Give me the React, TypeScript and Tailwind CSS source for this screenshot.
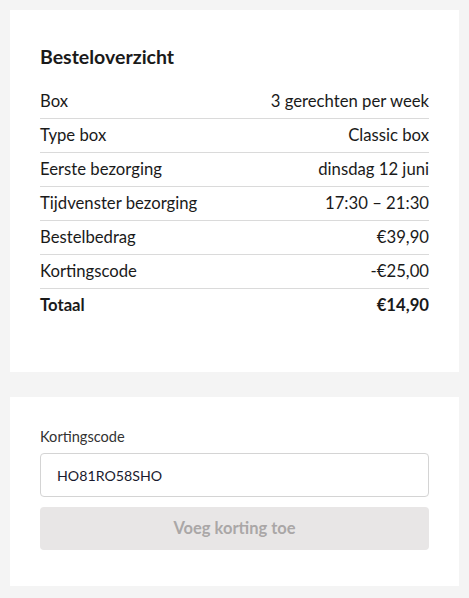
import React from 'react'

const rows = [
  { label: 'Box', value: '3 gerechten per week' },
  { label: 'Type box', value: 'Classic box' },
  { label: 'Eerste bezorging', value: 'dinsdag 12 juni' },
  { label: 'Tijdvenster bezorging', value: '17:30 – 21:30' },
  { label: 'Bestelbedrag', value: '€39,90' },
  { label: 'Kortingscode', value: '-€25,00' },
]

export default function App() {
  return (
    <div className="min-h-screen bg-[#f4f4f4] px-[10px] pt-[10px] pb-3 text-[#1a1a1a] font-['Lato',sans-serif]">
      {/* Order summary */}
      <div className="bg-white px-[30px] pt-[35px] pb-[50px]">
        <h2 className="text-[19.5px] leading-6 font-bold mb-[16px]">Besteloverzicht</h2>
        <div>
          {rows.map((row) => (
            <div
              key={row.label}
              className="flex items-center justify-between h-[34px] border-b border-[#dadada] text-[16.7px]"
            >
              <span>{row.label}</span>
              <span>{row.value}</span>
            </div>
          ))}
          <div className="flex items-center justify-between h-[33px] text-[16.7px] font-bold">
            <span>Totaal</span>
            <span>€14,90</span>
          </div>
        </div>
      </div>

      {/* Discount code */}
      <div className="bg-white mt-[25px] px-[30px] pt-[30px] pb-[36px]">
        <label className="block text-[14.6px] leading-5 mb-[6px] text-[#333]">Kortingscode</label>
        <input
          type="text"
          defaultValue="HO81RO58SHO"
          className="w-full h-[44px] px-4 border border-[#d4d4d4] rounded-[4px] text-[14.2px] text-[#1a1a2e] outline-none"
        />
        <button
          disabled
          className="mt-[10px] w-full h-[43px] rounded-[4px] bg-[#e8e6e6] text-[#aaa7a7] font-bold text-[16.5px]"
        >
          Voeg korting toe
        </button>
      </div>
    </div>
  )
}
